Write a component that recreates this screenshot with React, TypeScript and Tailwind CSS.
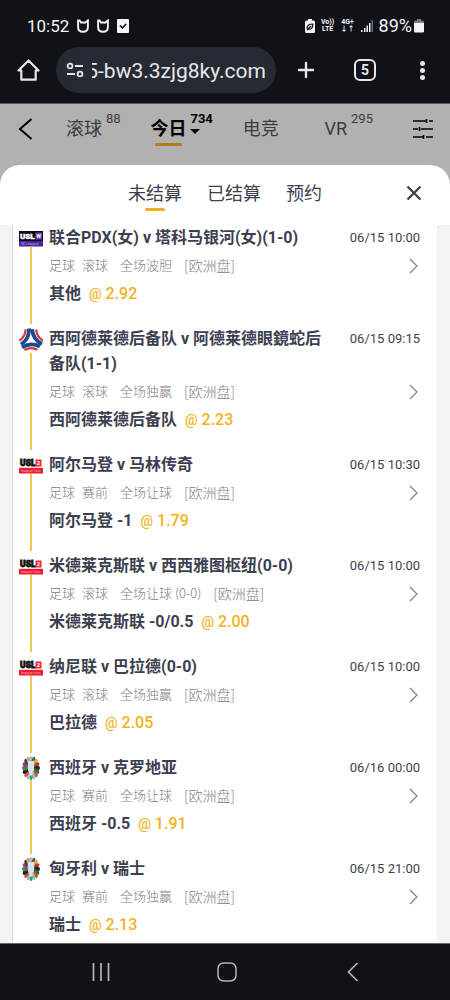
import { Plus } from 'lucide-react'

type LogoKind = 'usl' | 'usl2' | 'fa' | 'euro'

type Bet = {
  logo: LogoKind
  title: string
  time: string
  stage: string
  market: string
  pick: string
  odds: string
}

const bets: Bet[] = [
  { logo: 'usl', title: '联合PDX(女) v 塔科马银河(女)(1-0)', time: '06/15 10:00', stage: '滚球', market: '全场波胆', pick: '其他', odds: '2.92' },
  { logo: 'fa', title: '西阿德莱德后备队 v 阿德莱德眼鏡蛇后备队(1-1)', time: '06/15 09:15', stage: '滚球', market: '全场独赢', pick: '西阿德莱德后备队', odds: '2.23' },
  { logo: 'usl2', title: '阿尔马登 v 马林传奇', time: '06/15 10:30', stage: '赛前', market: '全场让球', pick: '阿尔马登 -1', odds: '1.79' },
  { logo: 'usl2', title: '米德莱克斯联 v 西西雅图枢纽(0-0)', time: '06/15 10:00', stage: '滚球', market: '全场让球 (0-0)', pick: '米德莱克斯联 -0/0.5', odds: '2.00' },
  { logo: 'usl2', title: '纳尼联 v 巴拉德(0-0)', time: '06/15 10:00', stage: '滚球', market: '全场独赢', pick: '巴拉德', odds: '2.05' },
  { logo: 'euro', title: '西班牙 v 克罗地亚', time: '06/16 00:00', stage: '赛前', market: '全场让球', pick: '西班牙 -0.5', odds: '1.91' },
  { logo: 'euro', title: '匈牙利 v 瑞士', time: '06/15 21:00', stage: '赛前', market: '全场独赢', pick: '瑞士', odds: '2.13' },
]

// clockwise from the top
const petals = ['#b9cad8', '#2f5c50', '#e8a33a', '#c0392b', '#222c2c', '#1f6b46', '#d6452c', '#7fd1b0', '#2aa47a', '#9fb9c9', '#e2572f', '#1f1f1f', '#2f8f5b', '#b13a6c', '#26406f', '#e5a13c']

function LeagueLogo({ kind }: { kind: LogoKind }) {
  if (kind === 'usl') {
    return (
      <svg viewBox="0 0 24 16" className="mt-1.5 w-6 h-4 shrink-0">
        <rect width="24" height="10" fill="#0c0a12" />
        <rect x="16.500" y="1.500" width="6.500" height="7" fill="#6f3fc0" />
        <rect y="10" width="24" height="5.500" fill="#4b259a" />
        <text x="1" y="8" fontSize="8" fontWeight="900" fill="#fff" stroke="#fff" strokeWidth="0.4" fontFamily="Roboto, sans-serif">USL</text>
        <text x="17.5" y="7" fontSize="5" fontWeight="700" fill="#fff" fontFamily="Roboto, sans-serif">W</text>
        <text x="2" y="14.2" fontSize="4" fill="#b79be8" fontFamily="Roboto, sans-serif">W League</text>
      </svg>
    )
  }
  if (kind === 'usl2') {
    return (
      <svg viewBox="0 0 24 16" className="mt-1.5 w-6 h-4 shrink-0">
        <text x="1" y="8" fontSize="8.5" fontWeight="900" fill="#111" stroke="#111" strokeWidth="0.8" fontFamily="Roboto, sans-serif">USL</text>
        <rect x="16.5" y="1.5" width="6" height="7" fill="#ee2737" />
        <text x="17.8" y="7.2" fontSize="6" fontWeight="700" fill="#fff" fontFamily="Roboto, sans-serif">2</text>
        <rect x="0" y="9.8" width="24" height="5.7" fill="#ee1c2e" />
        <text x="2" y="14" fontSize="4" fill="#ffa0a6" fontFamily="Roboto, sans-serif">league two</text>
      </svg>
    )
  }
  if (kind === 'fa') {
    return (
      <svg viewBox="0 0 26 26" className="mt-px size-[26px] shrink-0" fill="none">
        {[0, 120, 240].map((angle) => (
          <g key={angle} transform={`rotate(${angle} 13 13)`}>
            <path d="M11 1.500C11.500 8 9.500 13 3 17.500" stroke="#1c4c8c" strokeWidth="3.800" />
            <path d="M7.600 2.300C7.600 7 5.500 11 1.300 13.600" stroke="#d4323f" strokeWidth="2.200" />
          </g>
        ))}
      </svg>
    )
  }
  return (
    <svg viewBox="0 0 18 24" className="mt-px w-[18px] h-6 shrink-0">
      {petals.map((color, i) => (
        <ellipse key={i} cx="9" cy="3.900" rx="2.300" ry="4" fill={color} transform={`translate(9 12) scale(0.74 1) rotate(${i * 22.5}) translate(-9 -12)`} />
      ))}
      <path d="M6.200 4.500c1.500 1 4.100 1 5.600 0 .6 3.500.6 7-.3 10.200-.6 1.500-1 2.200-1 4.800h-3c0-2.600-.4-3.300-1-4.800C5.600 11.500 5.600 8 6.200 4.500Z" fill="#d6e4ee" />
      <path d="M6 2.500c1.800-.9 4.200-.9 6 0" stroke="#8fa9bd" strokeWidth="0.800" fill="none" />
    </svg>
  )
}

function StatusBar() {
  return (
    <div className="flex items-center justify-between pl-[27px] pr-[26px] h-[47px] pt-1 text-gray-100">
      <div className="flex items-center gap-2">
        <span className="text-[17px] leading-6">10:52</span>
        {[0, 1].map((i) => (
          <svg key={i} viewBox="0 0 12 14" className="w-3 h-3.5" fill="none" stroke="currentColor" strokeWidth="1.900">
            <path d="M4.500 4.200 2.600 1.500H1.100V8c0 3 2 4.800 4.900 4.800S10.900 11 10.900 8V1.500L8 3.800 4 3.200" />
          </svg>
        ))}
        <svg viewBox="0 0 12 14" className="w-3 h-3.5">
          <rect width="12" height="14" rx="1" fill="currentColor" />
          <path d="m3 6.500 2.300 2.300L9.200 5" stroke="#111217" strokeWidth="1.600" fill="none" />
        </svg>
      </div>
      <div className="flex items-center">
        <svg viewBox="0 0 10 14" className="w-2.5 h-3.5 mr-1.5">
          <path d="M3 0h4v1.500h1.500Q10 1.500 10 3v9.500q0 1.500-1.500 1.500h-7Q0 14 0 12.500V3q0-1.500 1.500-1.500H3Z" fill="currentColor" />
          <path d="M2.300 10.500C1.500 6.500 4 5 7.800 5c.2 4-2 6-4.300 4.500M2.300 11 6 7" stroke="#111217" strokeWidth="1.200" fill="none" />
        </svg>
        <span className="mr-1.5 w-3.5 text-center text-[7px] leading-[7px] font-bold">Vo))<br />LTE</span>
        <span className="mr-1.5 w-3.5 text-center text-[7px] leading-[7px] font-bold">4G+<br />↓↑</span>
        <svg viewBox="0 0 12 14" className="w-3 h-3.5 mr-1.5" fill="currentColor">
          <path d="M0 11h1.500v2H0zM3 9h1.500v4H3zM5.500 6.500H7V13H5.500zM8 4h1.500v9H8z" />
          <path d="M10.500 1H12v12h-1.500z" opacity="0.400" />
        </svg>
        <span className="mr-0.5 text-lg leading-6">89%</span>
        <svg viewBox="0 0 10 14" className="w-2.5 h-3.5">
          <path d="M3 0h4v1.500h1.500Q10 1.500 10 3H0q0-1.500 1.500-1.500H3Z" fill="#777" />
          <path d="M0 3.500h10v9q0 1-1 1H1q-1 0-1-1Z" fill="currentColor" />
        </svg>
      </div>
    </div>
  )
}

function BrowserBar() {
  return (
    <div className="flex items-center pl-[17px] pr-[18px] pb-2.5 text-gray-200">
      <button aria-label="主页" className="mr-4">
        <svg viewBox="0 0 23 24" className="w-[23px] h-6" fill="none" stroke="currentColor" strokeWidth="2.200">
          <path d="M1.500 12.500 11.500 2.500 21.500 12.500H18.700v9.200H4.300v-9.200Z" strokeLinejoin="round" />
        </svg>
      </button>
      <button className="flex flex-1 min-w-0 items-center h-[46px] rounded-full bg-[#262a33] px-2.5">
        <svg viewBox="0 0 18 16" className="w-[18px] h-4 shrink-0" fill="none" stroke="currentColor" strokeWidth="1.800">
          <circle cx="4" cy="4" r="2.400" />
          <path d="M9 4h8M1 12h8" />
          <circle cx="14" cy="12" r="2.400" />
        </svg>
        <span className="relative ml-auto pt-0.5 text-[21px] leading-7 whitespace-nowrap">
          5-bw3.3zjg8ky.com
          <span className="absolute inset-y-0 left-0 w-1.5 bg-[#262a33]" />
        </span>
      </button>
      <button aria-label="新标签页" className="ml-[18px]">
        <Plus className="size-6" strokeWidth={2.4} />
      </button>
      <button className="ml-9 flex items-center justify-center size-[22px] rounded-md border-2 border-gray-200 text-sm font-bold">5</button>
      <button aria-label="更多" className="ml-9 flex w-5 flex-col items-center gap-0.5">
        <span className="size-[5px] rounded-full bg-gray-200" />
        <span className="size-[5px] rounded-full bg-gray-200" />
        <span className="size-[5px] rounded-full bg-gray-200" />
      </button>
    </div>
  )
}

function SportsNav() {
  return (
    <header className="flex items-start h-[62px] pl-[18px] pr-[17px] pt-[11px] border-t border-[#555] text-lg leading-7 text-[#3a3b44]">
      <button aria-label="返回" className="mt-0.5 mr-[33px] text-black">
        <svg viewBox="0 0 15 24" className="w-[15px] h-6" fill="none" stroke="currentColor" strokeWidth="2">
          <path d="M13.500 2 2 12l11.500 10" />
        </svg>
      </button>
      <nav className="flex flex-1 items-start justify-between mr-10">
        <button className="flex items-start gap-1">
          滚球<sup className="top-0 text-[13px] leading-4 -mt-1">88</sup>
        </button>
        <button className="flex items-start gap-1 font-bold text-black">
          <span className="flex flex-col items-center">
            今日
            <span className="w-[27px] h-[3px] rounded-full bg-[#b07f16]" />
          </span>
          <span className="flex flex-col items-start gap-0.5 -mt-1">
            <span className="text-[13px] leading-4">734</span>
            <svg viewBox="0 0 10 5" className="w-2.5 h-[5px]">
              <path d="M0 0h10L5 5Z" fill="currentColor" />
            </svg>
          </span>
        </button>
        <button className="pr-4">电竞</button>
        <button className="flex items-start gap-1">
          VR<sup className="top-0 text-[13px] leading-4 -mt-1">295</sup>
        </button>
      </nav>
      <button aria-label="筛选" className="mt-1 text-black">
        <svg viewBox="0 0 20 20" className="size-5" fill="none" stroke="currentColor" strokeWidth="1.600">
          <path d="M0 2h13M16 2h4M13.500 0v4M0 10h5M8 10h12M6.500 8v4M0 18h10M13 18h7M10.500 16v4" />
        </svg>
      </button>
    </header>
  )
}

function BetRow({ bet, last }: { bet: Bet; last: boolean }) {
  return (
    <li className="flex">
      <div className="flex w-6 flex-col items-center mr-[6px] pb-0.5">
        <LeagueLogo kind={bet.logo} />
        {!last && <span className="w-0.5 flex-1 bg-[#efc750]" />}
      </div>
      <div className={last ? 'flex-1 min-w-0' : 'flex-1 min-w-0 pb-[21px]'}>
        <div className="flex gap-5">
          <h3 className="flex-1 text-base leading-[25px] font-bold">{bet.title}</h3>
          <time className="text-[13px] leading-[25px]">{bet.time}</time>
        </div>
        <div className="mt-[3px] flex h-6 items-center text-[13px] font-light text-[#808080] font-['Noto_Sans_CJK_SC',sans-serif]">
          <span className="mr-[7px]">足球</span>
          <span className="mr-3">{bet.stage}</span>
          <span className="mr-3">{bet.market}</span>
          <span className="text-sm">[欧洲盘]</span>
          <button aria-label="详情" className="ml-auto mr-0.5 pt-0.5">
            <svg viewBox="0 0 9 16" className="w-[9px] h-4" fill="none" stroke="currentColor" strokeWidth="1.200">
              <path d="m1 1 7 7-7 7" />
            </svg>
          </button>
        </div>
        <div className="mt-1.5 flex items-center gap-2 leading-[22px]">
          <strong className="font-bold">{bet.pick}</strong>
          <span className="flex items-center gap-1 font-medium text-[#f2b21b]">
            <span className="text-sm">@</span>
            {bet.odds}
          </span>
        </div>
      </div>
    </li>
  )
}

function BetSheet() {
  return (
    <section className="flex flex-1 flex-col rounded-t-[20px] bg-white text-[#3c3f50]">
      <div className="grid grid-cols-[1fr_auto_1fr] items-start px-7 pt-[15px] pb-3.5 text-lg leading-7">
        <span />
        <div className="flex items-start gap-[25px]">
          <button className="flex flex-col items-center">
            未结算
            <span className="w-5 h-[3px] rounded-full bg-[#efb01f]" />
          </button>
          <button>已结算</button>
          <button>预约</button>
        </div>
        <button aria-label="关闭" className="justify-self-end mt-[5px]">
          <svg viewBox="0 0 16 16" className="size-4" fill="none" stroke="#444" strokeWidth="2.400">
            <path d="m1.500 1.500 13 13M14.500 1.500l-13 13" />
          </svg>
        </button>
      </div>
      <div className="flex flex-1 flex-col bg-[#f3f3f3] px-3">
        <ul className="flex-1 border-l border-[#ddd] bg-white pl-[6px] pr-[17px] mr-px">
          {bets.map((bet, i) => (
            <BetRow key={i} bet={bet} last={i === bets.length - 1} />
          ))}
        </ul>
      </div>
    </section>
  )
}

function SystemNav() {
  return (
    <div className="flex items-center h-[57px] pl-[38px] pr-[34px] border-t border-[#666] bg-[#111217] text-[#b4b5b8]">
      <button aria-label="最近" className="flex flex-1 justify-center">
        <svg viewBox="0 0 18 18" className="size-[18px]" stroke="currentColor" strokeWidth="1.700">
          <path d="M1.500 0v18M9 0v18M16.500 0v18" />
        </svg>
      </button>
      <button aria-label="主屏幕" className="flex flex-1 justify-center">
        <svg viewBox="0 0 20 20" className="size-5" fill="none" stroke="currentColor" strokeWidth="1.500">
          <rect x="1" y="1" width="18" height="18" rx="5.500" />
        </svg>
      </button>
      <button aria-label="后退" className="flex flex-1 justify-center">
        <svg viewBox="0 0 12 20" className="w-3 h-5" fill="none" stroke="currentColor" strokeWidth="1.700">
          <path d="M10.500 1 1.500 10l9 9" />
        </svg>
      </button>
    </div>
  )
}

export default function App() {
  return (
    <div className="flex min-h-screen flex-col bg-[#b1b1b1] font-[Roboto,'Noto_Sans_CJK_SC',sans-serif]">
      <div className="bg-[#111217]">
        <StatusBar />
        <BrowserBar />
      </div>
      <SportsNav />
      <BetSheet />
      <SystemNav />
    </div>
  )
}
